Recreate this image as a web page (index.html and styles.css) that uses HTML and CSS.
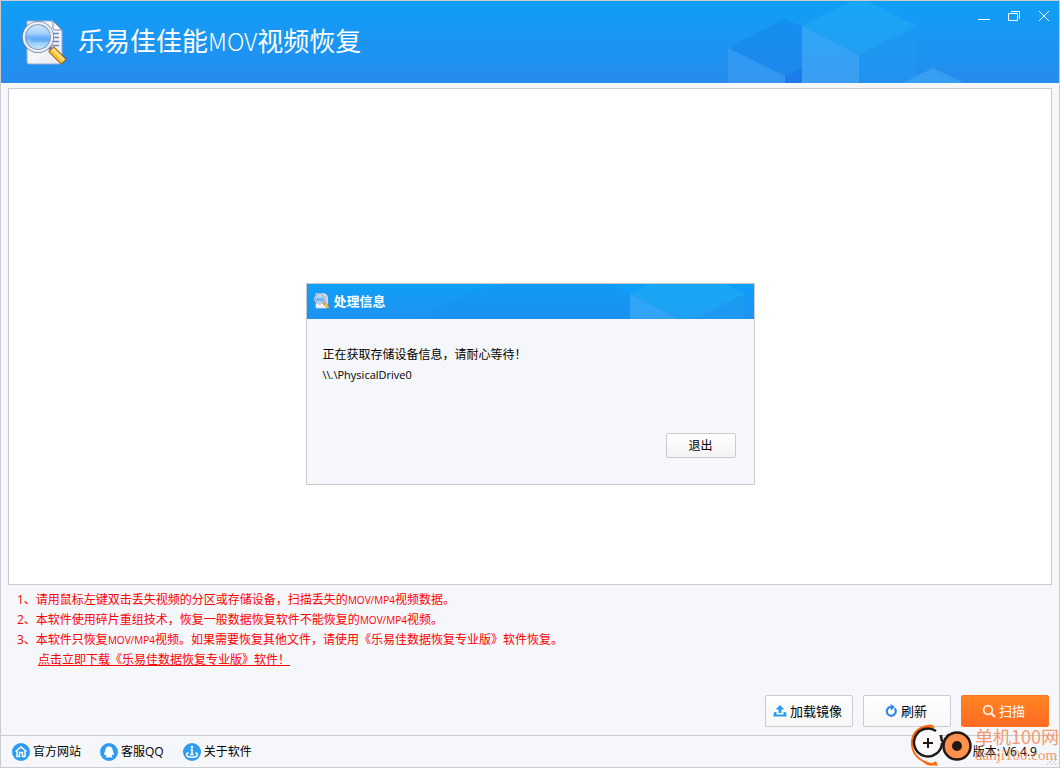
FILE: index.html
```html
<!DOCTYPE html>
<html lang="zh-CN">
<head>
<meta charset="utf-8">
<meta name="viewport" content="width=device-width, initial-scale=1">
<title>乐易佳佳能MOV视频恢复</title>
<link rel="stylesheet" href="styles.css">
</head>
<body>
<svg class="defs" width="0" height="0" aria-hidden="true">
  <defs>
    <linearGradient id="lens" x1="0" y1="0" x2="0" y2="1">
      <stop offset="0" stop-color="#d3ebff"/><stop offset=".38" stop-color="#a5d2fc"/>
      <stop offset=".5" stop-color="#6ab2f8"/><stop offset=".7" stop-color="#92cdfa"/><stop offset="1" stop-color="#d5f2ff"/>
    </linearGradient>
    <linearGradient id="handle" x1="0" y1="1" x2="1" y2="0">
      <stop offset="0" stop-color="#d87804"/><stop offset=".5" stop-color="#ffd04a"/><stop offset="1" stop-color="#c97200"/>
    </linearGradient>
    <linearGradient id="paper" x1="0" y1="0" x2="1" y2="1">
      <stop offset="0" stop-color="#ffffff"/><stop offset="1" stop-color="#e9ebf5"/>
    </linearGradient>
    <symbol id="app-logo" viewBox="0 0 46 46">
      <path d="M5 1H31L40 10V42Q40 44 38 44H7Q5 44 5 42Z" fill="url(#paper)" stroke="#9aaacc"/>
      <path d="M31 1V8Q31 10 33 10H40Z" fill="#f8faff" stroke="#7788b0"/>
      <path d="M30 13.500H37M31 17.500H37M31 21.500H37M30 25.500H37" stroke="#7184ad" stroke-width="1.500"/>
      <path d="M27 27L31 31" stroke="#7d89a8" stroke-width="4"/>
      <path d="M29 29L42 42" stroke="#8c4d08" stroke-width="8"/>
      <path d="M29.500 29.500L41.500 41.500" stroke="url(#handle)" stroke-width="6.500"/>
      <path d="M31 29L42 40" stroke="#ffe58c" stroke-width="2"/>
      <circle cx="16" cy="17" r="14" fill="url(#lens)" stroke="#7080a3" stroke-width="4"/>
      <circle cx="16" cy="17" r="14" fill="none" stroke="#e8edf7" stroke-width="2.500"/>
      <path d="M9 18H27V22H9Z" fill="#4a9cf0" opacity=".45"/>
    </symbol>
  </defs>
</svg>

<div class="window">
  <header class="titlebar">
    <svg class="titlebar-art" viewBox="0 0 340 82" preserveAspectRatio="xMaxYMin" aria-hidden="true">
      <path d="M9 47L66 18L83 26V67L66 75Z" fill="#1478e8" opacity=".3"/>
      <path d="M9 47L66 75V82H9Z" fill="#62b5fa" opacity=".25"/>
      <path d="M66 75L83 67V82H66Z" fill="#1868ea" opacity=".5"/>
      <path d="M83 25L140 -4L198 25L140 54Z" fill="#24b0f3" opacity=".45"/>
      <path d="M83 25L140 54V82H83Z" fill="#55b8fa" opacity=".42"/>
      <path d="M140 54L198 25V82H140Z" fill="#219bef" opacity=".4"/>
      <path d="M184 82L214 67L245 82Z" fill="#55b8fa" opacity=".4"/>
    </svg>
    <svg class="titlebar-logo" aria-hidden="true"><use href="#app-logo"/></svg>
    <h1 class="titlebar-name">乐易佳佳能<span class="titlebar-latin">MOV</span>视频恢复</h1>
    <div class="window-controls">
      <button class="window-button" type="button" aria-label="最小化"><svg viewBox="0 0 12 12"><path d="M0 9.500H12"/></svg></button>
      <button class="window-button" type="button" aria-label="还原"><svg viewBox="0 0 12 12"><path d="M.5 3.500H9.500V10.500H.5ZM3 1.500H11.500V9"/></svg></button>
      <button class="window-button" type="button" aria-label="关闭"><svg viewBox="0 0 12 12"><path d="M1 1L11 11M11 1L1 11"/></svg></button>
    </div>
  </header>

  <main class="content">
    <div class="device-list"></div>
    <ol class="notes">
      <li>1、请用鼠标左键双击丢失视频的分区或存储设备，扫描丢失的<span class="latin">MOV/MP4</span>视频数据。</li>
      <li>2、本软件使用碎片重组技术，恢复一般数据恢复软件不能恢复的<span class="latin">MOV/MP4</span>视频。</li>
      <li>3、本软件只恢复<span class="latin">MOV/MP4</span>视频。如果需要恢复其他文件，请使用《乐易佳数据恢复专业版》软件恢复。</li>
    </ol>
    <a class="download" href="#">点击立即下载《乐易佳数据恢复专业版》软件！</a>
    <div class="actions">
      <button class="action" type="button">
        <svg class="action-icon" viewBox="0 0 14 14" aria-hidden="true"><path d="M7 1L11.500 5.500H8.500V9H5.500V5.500H2.500Z" fill="#2e9bf2"/><path d="M3.500 8H1.500L.5 10V12.500H13.500V10L12.500 8H10.500V10.500H3.500Z" fill="#2e9bf2"/></svg>加载镜像
      </button>
      <button class="action" type="button">
        <svg class="action-icon" viewBox="0 0 14 14" aria-hidden="true"><path d="M10.800 4.500A4.500 4.500 0 1 1 5 3.400L7.500 3" fill="none" stroke="#2e88e5" stroke-width="2.200"/><path d="M6.500 0L11 3L7 6.500Z" fill="#2e88e5"/></svg>刷新
      </button>
      <button class="action action-primary" type="button">
        <svg class="action-icon" viewBox="0 0 14 14" aria-hidden="true"><circle cx="6" cy="6" r="4.300" fill="none" stroke="#ffeee2" stroke-width="1.800"/><path d="M9 9L13 13" stroke="#ffeee2" stroke-width="2.200"/></svg>扫描
      </button>
    </div>
  </main>

  <footer class="statusbar">
    <nav class="links">
      <a class="link" href="#"><svg class="link-icon" viewBox="0 0 18 18" aria-hidden="true"><circle cx="9" cy="9" r="9" fill="#2d9bf0"/><path d="M3.500 8.500L9 4L14.500 8.500M5 8V13.500H7.500V9.500H10.500V13.500H13V8" fill="none" stroke="#fff" stroke-width="1.400"/></svg>官方网站</a>
      <a class="link" href="#"><svg class="link-icon" viewBox="0 0 18 18" aria-hidden="true"><circle cx="9" cy="9" r="9" fill="#2d9bf0"/><path d="M9 3.500C6.300 3.500 5.300 5.500 5.300 7.500L4 11Q4 12.500 5.300 11.500L6.500 13L5.500 14.500H8.500L9 14L9.500 14.500H12.500L11.500 13L12.700 11.500Q14 12.500 14 11L12.700 7.500C12.700 5.500 11.700 3.500 9 3.500Z" fill="#fff"/></svg>客服QQ</a>
      <a class="link" href="#"><svg class="link-icon" viewBox="0 0 18 18" aria-hidden="true"><circle cx="9" cy="9" r="9" fill="#2d9bf0"/><circle cx="9" cy="4" r="1.300" fill="#fff"/><path d="M7.500 6.500H9V11.500M7 11.500H11" fill="none" stroke="#fff" stroke-width="1.600"/><path d="M5.500 9.500C1.500 11.500 4 14.300 9 14.300S16.500 11.500 12.500 9.500" fill="none" stroke="#fff" stroke-width="1.600"/></svg>关于软件</a>
    </nav>
    <span class="version">版本: V6.4.9</span>
    <div class="watermark" aria-hidden="true">
      <svg class="watermark-logo" viewBox="0 0 64 44">
        <path d="M23 3C8 2 1 11 2 22S12 40 27 42" fill="none" stroke="#ff6b0c" stroke-width="2"/>
        <path d="M10 8Q16 0 22 2L25 5Q15 4 10 8ZM12 37Q20 43 26 38L27 41Q20 45 14 40Z" fill="#ff6b0c"/>
        <path d="M26 8A14 14 0 1 0 32 20" fill="#fafafa" stroke="#221815" stroke-width="2.500"/>
        <path d="M18 15V25M13 20H23" stroke="#221815" stroke-width="2"/>
        <path d="M31 12Q31 18 34 20M39 11Q37 15 34 17" fill="none" stroke="#221815" stroke-width="2.500"/>
        <circle cx="47" cy="23" r="13.500" fill="#ff914d" stroke="#221815" stroke-width="2.500"/>
        <circle cx="47" cy="23" r="5" fill="#221815"/>
      </svg>
      <div class="watermark-text"><span class="watermark-name">单机100网</span><span class="watermark-site">danji100.com</span></div>
    </div>
    <svg class="grip" viewBox="0 0 12 12" aria-hidden="true"><path d="M1 11L11 1M5 11L11 5M9 11L11 9" stroke="#b5b8bd" stroke-dasharray="2 1"/></svg>
  </footer>

  <div class="modal-layer">
    <section class="dialog" role="dialog" aria-labelledby="dialog-title">
      <header class="dialog-header">
        <svg class="dialog-art" viewBox="0 0 340 35" preserveAspectRatio="xMaxYMin" aria-hidden="true">
          <path d="M3 35L60 6Q130 -8 195 0L216 10V35Z" fill="#1683f1" opacity=".15"/>
          <path d="M216 10L235 0H312L331 10L281 35H265Z" fill="#24b5f3" opacity=".4"/>
          <path d="M216 10L265 35H216Z" fill="#55b8fa" opacity=".4"/>
          <path d="M331 10V35H281Z" fill="#219bef" opacity=".6"/>
        </svg>
        <svg class="dialog-logo" aria-hidden="true"><use href="#app-logo"/></svg>
        <h2 class="dialog-title" id="dialog-title">处理信息</h2>
      </header>
      <div class="dialog-body">
        <p class="dialog-line">正在获取存储设备信息，请耐心等待！</p>
        <p class="dialog-line dialog-path">\\.\PhysicalDrive0</p>
        <button class="dialog-button" type="button">退出</button>
      </div>
    </section>
  </div>
</div>
</body>
</html>
```

FILE: styles.css
```css
* { box-sizing: border-box; }

body {
  margin: 0;
  background: #f5f7fa;
  color: #000;
  font: 12px/20px "Open Sans", "Noto Sans CJK SC", sans-serif;
}

button { font: inherit; color: inherit; cursor: pointer; }
h1, h2, p, ol { margin: 0; padding: 0; }
svg { flex: none; }
.defs { position: absolute; }
.latin { font-size: 10px; }

.window {
  position: relative;
  display: flex;
  flex-direction: column;
  min-height: 100vh;
  border: 1px solid #c9cbcf;
}

/* Title bar */
.titlebar {
  position: relative;
  display: flex;
  align-items: center;
  gap: 10px;
  height: 82px;
  padding-left: 21px;
  background: linear-gradient(#0f9ff8, #268ced);
  color: #fff;
}
.titlebar-art { position: absolute; right: 0; top: 0; width: 340px; height: 82px; }
.titlebar-logo { width: 46px; height: 46px; margin-top: 2px; }
.titlebar-name {
  flex: 1;
  padding-bottom: 4px;
  font: 400 26px/40px "Noto Sans CJK SC", sans-serif;
}
.titlebar-latin { font-size: 24px; font-weight: 300; }
.window-controls {
  position: relative;
  display: flex;
  align-self: flex-start;
}
.window-button {
  display: grid;
  place-items: center;
  width: 30px;
  height: 30px;
  padding: 0;
  border: 0;
  background: none;
}
.window-button svg { width: 12px; height: 12px; fill: none; stroke: #fff; }

/* Content */
.content {
  flex: 1;
  display: flex;
  flex-direction: column;
  padding: 5px 7px 8px;
}
.device-list { flex: 1; border: 1px solid #c9cbcf; background: #fff; }
.notes { padding: 5px 9px 0; color: #f00; list-style: none; }
.download { align-self: flex-start; margin-left: 30px; color: #f00; }
.actions {
  display: flex;
  justify-content: flex-end;
  gap: 10px;
  margin-top: 25px;
  padding-right: 3px;
}
.action {
  display: flex;
  align-items: center;
  justify-content: center;
  gap: 3px;
  width: 88px;
  height: 32px;
  padding: 0 3px 0 0;
  border: 1px solid #c9cbcf;
  border-radius: 2px;
  background: linear-gradient(#fff, #f7f7f7);
  font-size: 13px;
}
.action-icon { width: 14px; height: 14px; }
.action-primary {
  border-color: #ff7420;
  background: linear-gradient(#ff8420, #ff6a25);
  color: #fff;
}

/* Status bar */
.statusbar {
  position: relative;
  display: flex;
  align-items: center;
  justify-content: space-between;
  height: 32px;
  padding: 0 22px 0 11px;
  border-top: 1px solid #c9cbcf;
}
.links { display: flex; gap: 19px; }
.link { display: flex; align-items: center; gap: 3px; color: inherit; text-decoration: none; }
.link-icon { width: 18px; height: 18px; }
.watermark {
  position: absolute;
  right: 0;
  bottom: 0;
  display: flex;
  align-items: center;
  gap: 1px;
  pointer-events: none;
}
.watermark-logo { width: 64px; height: 44px; }
.watermark-text {
  display: flex;
  flex-direction: column;
  color: #f5834b;
  opacity: .8;
  white-space: nowrap;
}
.watermark-name { font: 18px/20px "Noto Sans CJK SC", sans-serif; }
.watermark-site { font: 15px/18px "Liberation Serif", serif; }
.grip { position: absolute; right: 1px; bottom: 1px; width: 12px; height: 12px; }

/* Progress dialog */
.modal-layer {
  position: absolute;
  inset: 0;
  display: grid;
  place-items: center;
  pointer-events: none;
}
.dialog {
  width: 449px;
  max-width: 100%;
  border: 1px solid #c9cbcf;
  background: #f5f7fa;
  pointer-events: auto;
}
.dialog-header {
  position: relative;
  display: flex;
  align-items: center;
  gap: 4px;
  height: 35px;
  padding: 0 0 2px 7px;
  background: linear-gradient(#0f9ff8, #1e92f1);
  color: #fff;
}
.dialog-art { position: absolute; right: 0; top: 0; width: 340px; height: 35px; }
.dialog-logo { width: 16px; height: 16px; }
.dialog-title { font-size: 13px; line-height: 20px; }
.dialog-body {
  display: flex;
  flex-direction: column;
  padding: 26px 18px 26px 16px;
}
.dialog-path { font-size: 11px; }
.dialog-button {
  align-self: flex-end;
  width: 70px;
  height: 25px;
  margin-top: 48px;
  padding: 0;
  border: 1px solid #c9cbcf;
  border-radius: 2px;
  background: linear-gradient(#fff, #f3f3f3);
}
```
